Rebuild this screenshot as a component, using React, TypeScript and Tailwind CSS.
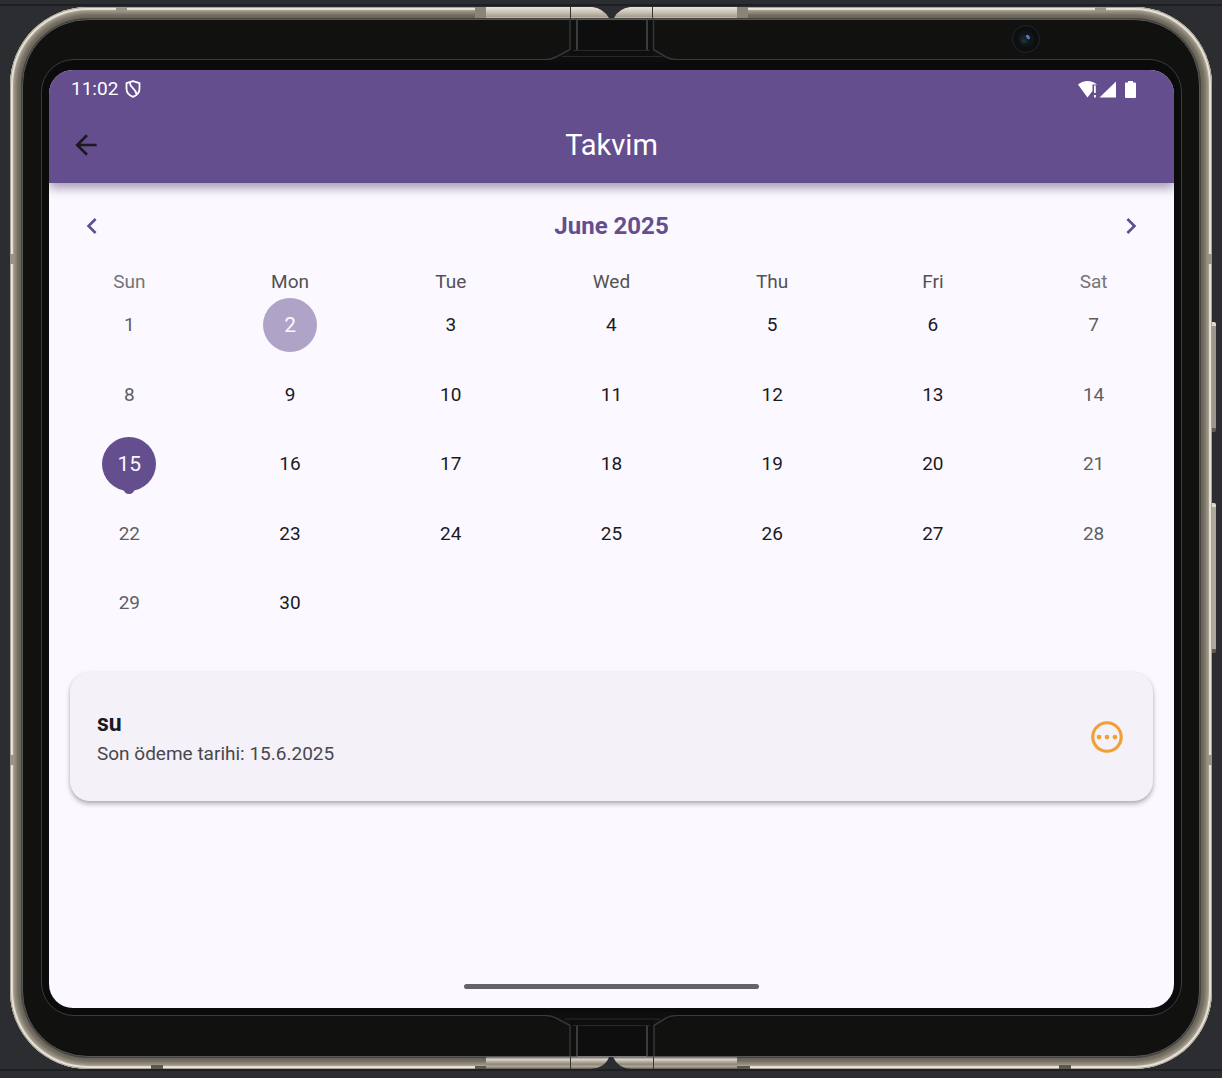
import React from "react";
import { MdArrowBack, MdChevronLeft, MdChevronRight, MdOutlinePending } from "react-icons/md";

const WEEKDAYS = ["Sun", "Mon", "Tue", "Wed", "Thu", "Fri", "Sat"];
const TODAY = 2;
const SELECTED = 15;

// June 2025 starts on a Sunday and has 30 days.
const WEEKS: (number | null)[][] = Array.from({ length: 5 }, (_, week) =>
  Array.from({ length: 7 }, (_, day) => {
    const date = week * 7 + day + 1;
    return date <= 30 ? date : null;
  }),
);

function TopHinge() {
  return (
    <svg
      aria-hidden="true"
      className="pointer-events-none absolute -top-[7px] left-1/2 -translate-x-1/2"
      width="340"
      height="70"
      viewBox="441 0 340 70"
      fill="none"
    >
      <defs>
        <linearGradient id="topMetal" x1="0" y1="7" x2="0" y2="18" gradientUnits="userSpaceOnUse">
          <stop offset="0" stopColor="#e9e4d9" />
          <stop offset="0.4" stopColor="#cfc9bd" />
          <stop offset="0.9" stopColor="#a39c8e" />
          <stop offset="1" stopColor="#d0cabd" />
        </linearGradient>
      </defs>
      <path d="M593 6H629V18H593Z" fill="#2b2d30" />
      <path d="M486 7H592Q603 8 609 18H486Z" fill="url(#topMetal)" />
      <path d="M737 7H631Q619 8 614 18H737Z" fill="url(#topMetal)" />
      <path d="M475 7H486V18H475ZM737 7H748V18H737Z" fill="#8a8477" />
      <path d="M570.5 7V18M652.5 7V18" stroke="#36352f" />
      <path d="M549 57H673V62H549ZM570 20H653V58H570Z" fill="#0e0e0e" />
      <path d="M546 59.5Q551 59.5 556 57L570 49.5V19" stroke="#343636" strokeWidth="1.5" />
      <path d="M676 59.5Q671 59.5 666 57L653.500 49.5V19" stroke="#343636" strokeWidth="1.5" />
      <path d="M577 19V50M647 19V50" stroke="#3a3d3d" strokeWidth="2" />
      <path d="M573 50.5H650M562 56.500H662" stroke="#282a2a" />
      <path d="M577 19.5H647" stroke="#5a5d5d" />
    </svg>
  );
}

function BottomHinge() {
  return (
    <svg
      aria-hidden="true"
      className="pointer-events-none absolute -bottom-[9px] left-1/2 -translate-x-1/2"
      width="340"
      height="70"
      viewBox="441 1008 340 70"
      fill="none"
    >
      <defs>
        <linearGradient id="bottomMetal" x1="0" y1="1057" x2="0" y2="1069" gradientUnits="userSpaceOnUse">
          <stop offset="0" stopColor="#6f6a5f" />
          <stop offset="0.2" stopColor="#d9d3c7" />
          <stop offset="0.6" stopColor="#8f887a" />
          <stop offset="0.8" stopColor="#aea799" />
          <stop offset="1" stopColor="#5e584c" />
        </linearGradient>
      </defs>
      <path d="M585 1057H635V1069H585Z" fill="#2b2d30" />
      <path d="M486 1057H609Q605 1068 590 1069H486Z" fill="url(#bottomMetal)" />
      <path d="M737 1057H613Q618 1068 631 1069H737Z" fill="url(#bottomMetal)" />
      <path d="M475 1066H486V1069H475ZM737 1066H750V1069H737Z" fill="#5e584c" />
      <path d="M570.5 1057V1069M653.5 1057V1069" stroke="#36352f" />
      <path d="M549 1012H673V1020H549ZM570 1020H653V1056H570Z" fill="#0e0e0e" />
      <path d="M546 1015.500Q551 1015.500 556 1018L570 1025.500V1056" stroke="#343636" strokeWidth="1.5" />
      <path d="M676 1015.500Q671 1015.500 666 1018L654 1025.500V1056" stroke="#343636" strokeWidth="1.5" />
      <path d="M577 1025V1056M647 1025V1056" stroke="#3a3d3d" strokeWidth="2" />
      <path d="M573 1025.500H650M565 1019H660" stroke="#282a2a" />
      <path d="M577 1056.500H647" stroke="#77797a" />
    </svg>
  );
}

function FrontCamera() {
  return (
    <svg aria-hidden="true" className="absolute right-[171px] top-[17px]" width="30" height="30" viewBox="0 0 30 30">
      <circle cx="15" cy="15" r="13.500" fill="#0d0e0f" stroke="#242527" />
      <circle cx="15" cy="15" r="8.500" fill="#101519" />
      <circle cx="13.500" cy="15.500" r="4.500" fill="#16212a" />
      <circle cx="13" cy="17" r="2" fill="#1d343a" />
      <ellipse cx="17" cy="13" rx="1.600" ry="2.500" fill="#5579bd" transform="rotate(-40 17 13)" />
    </svg>
  );
}

function ShieldIcon() {
  return (
    <svg aria-hidden="true" width="16" height="18" viewBox="0 0 16 18" fill="none" stroke="white" strokeWidth="1.800">
      <path d="M8 1.200L14.500 3.200V8.500C14.500 12.500 12 15.300 8 16.800C4 15.300 1.500 12.500 1.500 8.500V3.200Z" strokeLinejoin="round" />
      <path d="M4.800 2.500C4.800 8 10.500 8 11.500 14" />
    </svg>
  );
}

function StatusIcons() {
  return (
    <svg role="img" aria-label="Wi-Fi, signal, battery" width="60" height="20" viewBox="0 0 60 20" fill="white">
      <path d="M1 5.500Q5 2 10.500 2Q16 2 20 5.500H15.500V12L10.500 18.500Z" />
      <path d="M17 6.500H18.800V14H17ZM17 16H18.800V18.500H17Z" />
      <path d="M39 2.500V18.500H22.500Z" />
      <path d="M51 2H56V3.500H58Q59 3.500 59 4.500V18Q59 19 58 19H49Q48 19 48 18V4.500Q48 3.500 49 3.500H51Z" />
    </svg>
  );
}

function Day({ date, weekend }: { date: number; weekend: boolean }) {
  if (date === TODAY) {
    return (
      <button type="button" aria-current="date" className="size-[54px] rounded-full bg-[#afa3c7] text-[21px] text-[#faf9fe]">
        {date}
      </button>
    );
  }
  if (date === SELECTED) {
    return (
      <button type="button" aria-pressed="true" className="relative size-[54px] rounded-full bg-[#644e8e] text-[21px] text-[#faf9fe]">
        {date}
        <span className="absolute -bottom-[3px] left-1/2 size-[11px] -translate-x-1/2 rounded-full bg-[#644e8e]" />
      </button>
    );
  }
  return (
    <button
      type="button"
      className={weekend ? "size-[54px] rounded-full text-[19px] text-[#5f5e62]" : "size-[54px] rounded-full text-[19px] text-[#1b1a1e]"}
    >
      {date}
    </button>
  );
}

function Calendar() {
  return (
    <section aria-label="June 2025">
      <div className="flex h-[86px] items-center justify-between px-[27px] text-[#644e8e]">
        <button type="button" aria-label="Previous month">
          <MdChevronLeft size={32} />
        </button>
        <h2 className="text-[24px] font-bold leading-8">June 2025</h2>
        <button type="button" aria-label="Next month">
          <MdChevronRight size={32} />
        </button>
      </div>
      <table className="w-full table-fixed border-collapse text-center">
        <thead>
          <tr className="h-[21px]">
            {WEEKDAYS.map((name, i) => (
              <th
                key={name}
                scope="col"
                className={
                  i === 0 || i === 6
                    ? "p-0 align-bottom text-[19px] font-normal leading-4 text-[#757478]"
                    : "p-0 align-bottom text-[19px] font-normal leading-4 text-[#525155]"
                }
              >
                {name}
              </th>
            ))}
          </tr>
        </thead>
        <tbody>
          {WEEKS.map((week, w) => (
            <tr key={w} className="h-[70px] even:h-[69px]">
              {week.map((date, i) => (
                <td key={i} className="p-0 align-middle leading-[0]">
                  {date !== null && <Day date={date} weekend={i === 0 || i === 6} />}
                </td>
              ))}
            </tr>
          ))}
        </tbody>
      </table>
    </section>
  );
}

function PaymentCard() {
  return (
    <article className="mx-[21px] mt-[34px] flex h-[129px] items-center justify-between rounded-[20px] bg-[#f4f1f8] px-[27px] shadow-[0_3px_5px_rgba(0,0,0,0.27),0_1px_3px_rgba(0,0,0,0.08)]">
      <div className="pt-[2px]">
        <h3 className="text-[23px] font-bold leading-8 text-[#1b1a1e]">su</h3>
        <p className="text-[19px] leading-7 text-[#49474d]">Son ödeme tarihi: 15.6.2025</p>
      </div>
      <button type="button" aria-label="Pending" className="text-[#f39f37]">
        <MdOutlinePending size={38} />
      </button>
    </article>
  );
}

function EdgeMarks() {
  return (
    <div aria-hidden="true">
      <span className="absolute left-[106px] top-0 h-[4px] w-[11px] bg-[#9b9385]" />
      <span className="absolute right-[106px] top-0 h-[4px] w-[11px] bg-[#9b9385]" />
      <span className="absolute bottom-0 left-[141px] h-[4px] w-[12px] bg-[#5e584c]" />
      <span className="absolute bottom-0 right-[141px] h-[4px] w-[12px] bg-[#5e584c]" />
      <span className="absolute left-0 top-[247px] h-[10px] w-[4px] bg-[#9b9385]" />
      <span className="absolute right-0 top-[247px] h-[10px] w-[4px] bg-[#9b9385]" />
      <span className="absolute left-0 top-[748px] h-[10px] w-[4px] bg-[#9b9385]" />
      <span className="absolute right-0 top-[748px] h-[10px] w-[4px] bg-[#9b9385]" />
      <span className="absolute -right-[4px] top-[315px] h-[110px] w-[4px] rounded-r-[2px] border-b-4 border-t-4 border-b-[#625d52] border-t-[#ded8cd] bg-[#9d968a]" />
      <span className="absolute -right-[4px] top-[496px] h-[150px] w-[4px] rounded-r-[2px] border-b-4 border-t-4 border-b-[#625d52] border-t-[#ded8cd] bg-[#aea79b]" />
    </div>
  );
}

export default function App() {
  return (
    <div className="flex min-h-screen flex-col bg-[#2b2d30] px-[10px] pb-[9px] pt-[7px] font-['Roboto',sans-serif] shadow-[inset_0_4px_0_#2b2d30,inset_0_6px_0_#1e1f22,inset_0_-7px_0_#2b2d30,inset_0_-9px_0_#1e1f22]">
      <div className="relative flex flex-1 flex-col rounded-[78px] bg-[#6b6559] p-[12px] shadow-[inset_0_0_0_1px_#a8a194,inset_0_0_1px_3px_#eae5da,inset_0_0_4px_6px_#a8a092]">
        <EdgeMarks />
        <div className="relative flex flex-1 flex-col rounded-[66px] border border-[#55575a] bg-[#111110] pb-[40px] pl-[18px] pr-[17px] pt-[39px] shadow-[0_0_0_1px_#45433e]">
          <div className="flex flex-1 flex-col rounded-[33px] border border-[#393b3c] bg-[#0b0b0b] px-[7px] pb-[7px] pt-[10px]">
            <main className="flex flex-1 flex-col overflow-hidden rounded-[24px] bg-[#fbf9ff]">
              <header className="bg-[#644e8e] shadow-[0_5px_10px_rgba(60,35,90,0.45)]">
                <div className="flex h-[37px] items-center justify-between pl-[22px] pr-[37px] text-white">
                  <div className="flex items-center gap-[7px]">
                    <time className="text-[19px] leading-6">11:02</time>
                    <ShieldIcon />
                  </div>
                  <StatusIcons />
                </div>
                <div className="grid h-[76px] grid-cols-[1fr_auto_1fr] items-center px-[21px]">
                  <button type="button" aria-label="Back" className="justify-self-start text-[#1b1a1e]">
                    <MdArrowBack size={32} />
                  </button>
                  <h1 className="text-[29px] leading-9 text-white">Takvim</h1>
                </div>
              </header>
              <Calendar />
              <PaymentCard />
              <div className="mx-auto mb-[19px] mt-auto h-[5px] w-[295px] rounded-full bg-[#656367]" />
            </main>
          </div>
        </div>
        <TopHinge />
        <BottomHinge />
        <FrontCamera />
      </div>
    </div>
  );
}
